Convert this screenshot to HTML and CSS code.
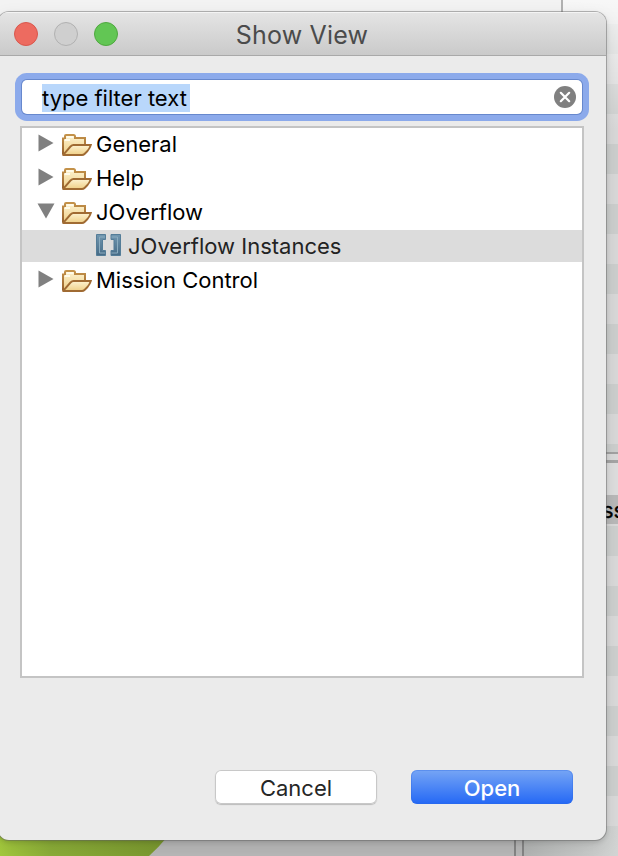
FILE: index.html
```html
<!DOCTYPE html>
<html lang="en">
<head>
<meta charset="utf-8">
<title>Show View</title>
<link rel="stylesheet" href="styles.css">
</head>
<body>
<svg width="0" height="0" class="defs" aria-hidden="true">
  <defs>
    <linearGradient id="fold" x1="0" y1="0" x2="0" y2="1"><stop offset="0" stop-color="#fdf3d2"/><stop offset="1" stop-color="#efcf86"/></linearGradient>
    <linearGradient id="edge" x1="0" y1="0" x2="0" y2="1"><stop offset="0" stop-color="#c4924a"/><stop offset="1" stop-color="#94602d"/></linearGradient>
    <linearGradient id="steel" x1="0" y1="0" x2="0" y2="1"><stop offset="0" stop-color="#7197b0"/><stop offset="1" stop-color="#466b86"/></linearGradient>
    <symbol id="folder" viewBox="0 0 30 22">
      <path d="M1 20.5V4.500H3V2Q3 1 4 1H11.500Q13 1 13 2.500V4H23V10" fill="url(#fold)" stroke="url(#edge)" stroke-width="2"/>
      <path d="M4.500 3H11.500M2.500 6H8" stroke="#fffbea" stroke-width="2"/>
      <path d="M1.200 20.800 8.500 12.500Q10 11 11.500 11H28.800Q28 14 25.500 17L22.500 20Q21.500 21 20 21H1.500Z" fill="url(#fold)" stroke="#a06b33" stroke-width="1.900"/>
    </symbol>
    <symbol id="right" viewBox="0 0 16 18"><path d="M.500 .500 15.500 9 .500 17.500Z" fill="#808080"/></symbol>
    <symbol id="down" viewBox="0 0 18 16"><path d="M.500 .500H17.500L9 15.500Z" fill="#808080"/></symbol>
  </defs>
</svg>
<div class="desktop">
  <div class="sidebar">
    <div class="rows upper"></div>
    <div class="sash"></div>
    <div class="blank"></div>
    <div class="header">ss</div>
    <div class="rows lower"></div>
  </div>
  <svg class="chart" width="170" height="20" viewBox="0 0 170 20"><defs><linearGradient id="lime"><stop offset="0" stop-color="#a3c93d"/><stop offset=".300" stop-color="#8bad38"/><stop offset="1" stop-color="#7a982f"/></linearGradient></defs><path d="M0 0H168Q159 11 149 20H0Z" fill="url(#lime)"/></svg>
  <div class="shade"></div>
  <div class="splitter"></div>
  <div class="divider"></div>
</div>
<main class="window">
  <header class="titlebar">
    <div class="lights"><i class="light close"></i><i class="light minimize"></i><i class="light zoom"></i></div>
    <h1 class="title">Show View</h1>
  </header>
  <div class="content">
    <div class="search">
      <span class="query">type filter text</span>
      <svg width="22" height="22" viewBox="0 0 22 22"><circle cx="11" cy="11" r="11" fill="#808080"/><path d="M6.800 6.800 15.200 15.200M15.200 6.800 6.800 15.200" stroke="#fff" stroke-width="2.200" stroke-linecap="round"/></svg>
    </div>
    <div class="tree">
      <div class="node"><svg class="arrow" width="16" height="18"><use href="#right"/></svg><svg class="folder" width="30" height="22"><use href="#folder"/></svg><span>General</span></div>
      <div class="node"><svg class="arrow" width="16" height="18"><use href="#right"/></svg><svg class="folder" width="30" height="22"><use href="#folder"/></svg><span>Help</span></div>
      <div class="node"><svg class="arrow open" width="18" height="16"><use href="#down"/></svg><svg class="folder" width="30" height="22"><use href="#folder"/></svg><span>JOverflow</span></div>
      <div class="node selected"><svg class="brackets" width="25" height="22" viewBox="0 0 25 22"><g fill="url(#steel)" stroke="#547d98" stroke-width="1"><path d="M.500 .500H9.500V5.500H6.500V16.500H9.500V21.500H.500Z"/><path d="M24.500 .500H15V5.500H18V16.500H15V21.500H24.500Z"/></g><path d="M9 3H3.500V19H9M15.500 3H21.500V19H15.500" fill="none" stroke="#8bacbf" stroke-width="1"/></svg><span>JOverflow Instances</span></div>
      <div class="node"><svg class="arrow" width="16" height="18"><use href="#right"/></svg><svg class="folder" width="30" height="22"><use href="#folder"/></svg><span>Mission Control</span></div>
    </div>
    <div class="actions"><button class="btn cancel">Cancel</button><button class="btn primary">Open</button></div>
  </div>
</main>
</body>
</html>
```
FILE: styles.css
```css
* { box-sizing: border-box; }
body { margin: 0; width: 618px; height: 856px; overflow: hidden; position: relative; font: 22px/34px Inter, "Liberation Sans", sans-serif; color: #000; }
.defs { position: absolute; }
.desktop { position: absolute; inset: 0; background: linear-gradient(#f3f3f3 0 12px, #b8b8b8 830px); }
.sidebar { position: absolute; left: 562px; top: 0; width: 56px; height: 856px; display: flex; flex-direction: column; background: #dedede; }
.upper { height: 452px; background: linear-gradient(rgba(255,255,255,.8), rgba(255,255,255,0) 130px), repeating-linear-gradient(#d9d9d9 0 24px, #cdcfce 24px 54px, #d9d9d9 54px 60px); }
.sash { height: 11px; background: #dadada; border-top: 2px solid #a2a2a2; border-bottom: 3px solid #a5a5a5; }
.blank { height: 32px; }
.header { height: 29px; padding-left: 40px; background: #b9b9b9; line-height: 31px; -webkit-text-stroke: .3px #000; }
.lower { height: 332px; background: repeating-linear-gradient(#ced0cf 0 30px, #dadada 30px 60px); background-position: 0 2px; }
.chart { position: absolute; left: 0; bottom: 0; }
.shade { position: absolute; left: 524px; bottom: 0; width: 94px; height: 30px; background: linear-gradient(90deg, #b2b4b3, #d2d4d3); }
.splitter { position: absolute; left: 514px; bottom: 0; width: 10px; height: 20px; border: 2px solid #858585; border-width: 0 2px; background: #b7b7b7; }
.divider { position: absolute; left: 561px; top: 0; width: 2px; height: 12px; background: #b1b1b1; }
.window { position: absolute; left: -2px; top: 12px; width: 608px; height: 828px; border-radius: 11px; background: #ebebeb; box-shadow: 0 0 0 1px rgba(100,100,100,.45), 0 2px 5px rgba(0,0,0,.15), 0 6px 18px rgba(0,0,0,.1); overflow: hidden; }
.titlebar { height: 44px; display: grid; grid-template-columns: 1fr auto 1fr; align-items: center; padding-left: 16px; border-bottom: 1px solid #a9a9a9; border-top: 1px solid #f4f4f4; background: linear-gradient(#e4e4e4, #cacaca); }
.lights { display: flex; gap: 16px; }
.light { width: 24px; height: 24px; border-radius: 50%; border: 1px solid; }
.close { background: #ed6b60; border-color: #d9574d; }
.minimize { background: #cfcfcf; border-color: #b1b1b1; }
.zoom { background: #62c654; border-color: #4fa83f; }
.title { margin: 0; font-size: 25px; font-weight: 400; color: #4b4b4b; letter-spacing: .2px; padding: 2px 16px 0 0; }
.content { padding: 24px 22px 0; }
.search { display: flex; align-items: center; justify-content: space-between; height: 34px; margin: 0 2px; padding: 0 6px 0 18px; background: #fff; border-radius: 5px; box-shadow: 0 0 0 1px #6788cd, 0 0 0 7px #8caaeb; }
.query { height: 28px; line-height: 28px; width: 148px; margin: 2px 0 0 2px; background: #b9d7fb; white-space: nowrap; }
.tree { height: 552px; margin-top: 12px; border: 2px solid #c4c4c4; background: #fff; }
.node { height: 34px; display: flex; align-items: center; padding-left: 16px; white-space: pre; position: relative; }
.node:first-child { margin-top: -1px; }
.arrow { margin-right: 8px; margin-bottom: 2px; }
.open { margin: 0 7px 2px -1px; }
.folder { margin: 2px 4px 0 0; }
.selected { height: 32px; margin: 1px 0; padding-left: 74px; background: #dcdcdc; color: #232323; }
.brackets { margin-right: 7px; margin-bottom: 2px; }
.actions { display: flex; justify-content: flex-end; gap: 34px; margin-top: 92px; padding-right: 11px; }
.btn { width: 162px; height: 34px; padding: 2px 0 0; border: 0; border-radius: 6px; font: 22px/32px Inter, "Liberation Sans", sans-serif; }
.cancel { background: #fff; color: #262626; box-shadow: inset 0 0 0 1px #c8c8c8, 0 1px 1px rgba(0,0,0,.2); }
.primary { color: #fff; background: linear-gradient(#76a5f5, #2468f5); box-shadow: inset 0 0 0 1px rgba(45,105,225,.35); font-weight: 500; }
```
